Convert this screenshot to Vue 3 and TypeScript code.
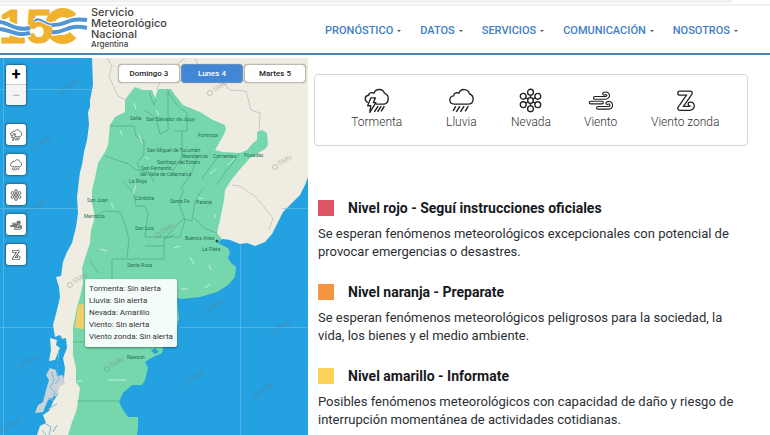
<script setup lang="ts">
import { ref } from 'vue'

interface Phenomenon { id: string; label: string; status: string }
interface Level { tone: string; title: string; text: string }
interface Place { name: string; x: number; y: number }

const menu: string[] = ['PRONÓSTICO', 'DATOS', 'SERVICIOS', 'COMUNICACIÓN', 'NOSOTROS']
const days: string[] = ['Domingo 3', 'Lunes 4', 'Martes 5']
const selectedDay = ref('Lunes 4')

const phenomena: Phenomenon[] = [
  { id: 'storm', label: 'Tormenta', status: 'Sin alerta' },
  { id: 'rain', label: 'Lluvia', status: 'Sin alerta' },
  { id: 'snow', label: 'Nevada', status: 'Amarillo' },
  { id: 'wind', label: 'Viento', status: 'Sin alerta' },
  { id: 'zonda', label: 'Viento zonda', status: 'Sin alerta' },
]

const levels: Level[] = [
  {
    tone: 'red',
    title: 'Nivel rojo - Seguí instrucciones oficiales',
    text: 'Se esperan fenómenos meteorológicos excepcionales con potencial de provocar emergencias o desastres.',
  },
  {
    tone: 'orange',
    title: 'Nivel naranja - Preparate',
    text: 'Se esperan fenómenos meteorológicos peligrosos para la sociedad, la vida, los bienes y el medio ambiente.',
  },
  {
    tone: 'yellow',
    title: 'Nivel amarillo - Informate',
    text: 'Posibles fenómenos meteorológicos con capacidad de daño y riesgo de interrupción momentánea de actividades cotidianas.',
  },
]

const places: Place[] = [
  { name: 'Salta', x: 130, y: 120 },
  { name: 'San Salvador de Jujuy', x: 146, y: 121 },
  { name: 'Formosa', x: 198, y: 137 },
  { name: 'San Miguel de Tucumán', x: 147, y: 152 },
  { name: 'Resistencia', x: 182, y: 158 },
  { name: 'Corrientes', x: 213, y: 158 },
  { name: 'Posadas', x: 244, y: 157 },
  { name: 'Santiago del Estero', x: 157, y: 164 },
  { name: 'San Fernando', x: 141, y: 170 },
  { name: 'del Valle de Catamarca', x: 140, y: 176 },
  { name: 'La Rioja', x: 129, y: 183 },
  { name: 'San Juan', x: 87, y: 202 },
  { name: 'Córdoba', x: 135, y: 200 },
  { name: 'Santa Fe', x: 170, y: 203 },
  { name: 'Paraná', x: 196, y: 204 },
  { name: 'Mendoza', x: 84, y: 218 },
  { name: 'San Luis', x: 135, y: 230 },
  { name: 'Buenos Aires', x: 185, y: 240 },
  { name: 'La Plata', x: 202, y: 251 },
  { name: 'Santa Rosa', x: 127, y: 267 },
  { name: 'Rawson', x: 127, y: 359 },
]

const marks: [number, number][] = [
  [62, 91], [210, 93], [34, 148], [275, 167], [28, 212], [158, 235],
  [70, 285], [207, 311], [22, 366], [107, 369], [274, 332], [188, 382], [256, 395], [4, 430],
]
</script>

<template>
  <svg class="defs" aria-hidden="true">
    <symbol id="storm" viewBox="0 0 24 24">
      <g class="line">
        <path d="M3.500 14C0 11.500 .5 7.500 4.500 7C4.500 4.500 7.500 4 9.500 5C11.500 0 18.500 .5 19.500 5C24.500 6.500 24.500 14 19.500 15.500H11.500" />
        <path d="M6.500 9.500h4.500l-2 4.500h2.500L5.500 23.500l1-6.500H3.500z" />
        <path class="drops" d="M13.500 17.500l-3.500 5.500M16.500 17.500l-3.500 5.500M19.500 17.500l-3 5" />
      </g>
    </symbol>
    <symbol id="rain" viewBox="0 0 24 24">
      <g class="line">
        <path d="M5 15.500C-.5 15 -.5 8 4.500 7.500C4.500 5 7 4 9.500 5C11.500 0 18.500 .5 19.500 5.500C24.500 7 24.500 15 19 15.500z" />
        <path class="drops" d="M6.500 17.500l-2.500 4.500M10.500 17.500l-3.500 5.500M14.500 17.500l-3.500 5.500M18.500 17.500l-3 5" />
      </g>
    </symbol>
    <symbol id="snow" viewBox="0 0 24 24">
      <g class="line">
        <circle cx="12" cy="12" r="2.700" />
        <path d="M12 6.800v2.500M12 14.700v2.500M7.500 9.400l2.200 1.300M14.300 13.300l2.200 1.300M16.500 9.400l-2.200 1.300M9.700 13.300l-2.200 1.300" />
        <circle cx="12" cy="4" r="2.800" /><circle cx="12" cy="20" r="2.800" />
        <circle cx="5" cy="8" r="2.800" /><circle cx="5" cy="16" r="2.800" />
        <circle cx="19" cy="8" r="2.800" /><circle cx="19" cy="16" r="2.800" />
      </g>
    </symbol>
    <symbol id="wind" viewBox="0 0 24 24">
      <g class="tube">
        <path d="M6.500 9.500H17C21 9 19.500 3.500 15.500 5.500M2.500 14H13.500M9.500 19H20C24 18.500 22.500 12.500 18.500 14.500" />
        <path class="core" d="M6.500 9.500H17C21 9 19.500 3.500 15.500 5.500M2.500 14H13.500M9.500 19H20C24 18.500 22.500 12.500 18.500 14.500" />
      </g>
    </symbol>
    <symbol id="zonda" viewBox="0 0 24 24">
      <g class="tube wide">
        <path d="M6.500 5H16.500L6.500 19.500H16C19.500 19 19 15 16.500 15.500" />
        <path class="core" d="M6.500 5H16.500L6.500 19.500H16C19.500 19 19 15 16.500 15.500" />
      </g>
    </symbol>
  </svg>

  <div class="page">
    <div class="topbar"></div>
    <header class="header">
      <a class="brand" href="#" aria-label="Servicio Meteorológico Nacional Argentina">
        <svg class="logo" viewBox="0 0 86 48" aria-hidden="true">
          <text x="-1" y="37" class="digits">15</text>
          <path class="ring" d="M73 11A13.500 13.500 0 1 0 73 29" />
          <g class="wave-edge">
            <path d="M-2 16C8 15 14 26 30 22M-2 23C8 22 14 31 30 27M52 19C66 20 68 11 87 14M52 26C64 28 68 17 87 22" />
            <path class="thin-edge" d="M34 15C40 10 44 18 53 19" />
          </g>
          <g class="wave">
            <path d="M-2 16C8 15 14 26 30 22M-2 23C8 22 14 31 30 27M52 19C66 20 68 11 87 14M52 26C64 28 68 17 87 22" />
            <path class="thin" d="M34 15C40 10 44 18 53 19" />
          </g>
        </svg>
        <span class="brand-text">Servicio<br />Meteorológico<br />Nacional<small>Argentina</small></span>
      </a>
      <nav class="nav">
        <a v-for="item in menu" :key="item" href="#">{{ item }}<i class="caret"></i></a>
      </nav>
    </header>

    <main class="main">
      <section class="map" aria-label="Mapa de alertas">
        <svg class="chart" viewBox="0 58 308 377" preserveAspectRatio="xMinYMin slice" aria-hidden="true">
          <path class="land" d="M92 58L93 85 90 100 90 107 88 112 89 125 87 140 84 152 82 165 80 172 79 180 77 197 78 213 76 227 72 243 67 252 63 262 61 276 56 277 59 287 60 297 57 310 53 325 55 337 60 335 62 339 66 338 67 348 63 358 65 368 64 378 60 383 55 388 58 394 54 400 49 411 43 415 46 423 40 426 37 435H110V330L218 240 223 239 230 240 240 244 247 243 255 246 265 242 272 234 275 228 283 212 292 203 300 195 305 185 308 177V58Z" />
          <path class="land" d="M50 338L57 340 56 345 60 348 55 360 49 361 51 350Z" />
          <path class="land isles" d="M50 368L56 370 57 376 63 375 65 384 60 386 57 395 48 400 43 412 35 413 38 405 43 402 46 390 49 380 46 375Z" />
          <path class="inlets" d="M52 372l2 9-4 6 5 5-3 8M60 378l-5 6M48 398l6 3M57 404l-9 5M44 423l7 4-2 8M57 425l-4 7M42 430l4 5M61 336l2 11M59 350l-1 11M58 363v15" />
          <path class="sea-gap" d="M58 340L62 338 65 345 62 358 61 373 57 373 59 357 60 347Z" />
          <path class="province-fill" d="M135 87L143 90 152 90 155 98 158 89 171 89 175 95 183 105 200 112 213 120 225 125 226 130 222 138 215 150 223 152 240 153 247 150 253 143 257 140 257 132 262 130 267 133 268 145 265 149 250 158 242 167 232 179 225 190 224 200 220 220 217 233 222 239 218 243 228 248 230 253 228 258 231 263 236 267 235 277 228 285 217 292 200 297 182 299 177 298 178 310 179 318 176 330 163 347 162 353 153 357 145 362 148 368 145 380 142 385 132 385 123 393 119 402 123 410 128 417 138 417 138 428 137 435H68L72 422 76 412 78 402 80 388 76 382 76 368 73 355 73 342 73 328 77 307 80 297 83 283 82 268 86 255 90 243 91 230 95 217 92 203 92 190 95 178 98 163 105 152 108 145 110 125 115 117 125 112 125 100 130 93Z" />
          <path class="alert-area" d="M78 305L84 304V329L75 328Z" />
          <path class="borders" d="M110 126h24l2 10 8 5v13l-7 9 3 7M144 110l12 8 4 16 8-4V90M149 92l5 13 2-5M168 92l9 13 10 8v18h-13M182 131v26l-10 15 5 5M105 156l24 8 7 6 12 2 6 10M124 182l10 12 2 12h9l3 8-3 23h35l5-17-6-17 5-14M95 217l9-6 16 1 5 12 4 15-2 19M90 260l8 13M112 259h52v-20l10-4M164 239l19-20 9 2 3-20 8-13M194 218l12 11 11 4M164 246h-19M112 259v34h30M73 342h48M77 401h42M198 155l-7 19-11 16M220 154l-18 24M240 153l-24 32" />
          <path class="far-borders" d="M107 58l5 8-3 10 9 20 12 6M195 58l8 18 15 2 12 12 16 1 5 19 9 3-1 20M232 185l8 1 16 11 17 21-4 12M157 89l6-14 22-17" />
          <path class="flecks" d="M134 103l2 6M139 135l3 8M156 110l3 5M198 198l5 1M215 214v4M111 203l3 6M174 248l6-2M190 257l4 7M209 265l2 5M169 284l5-5M181 289h7M145 157l4 2M100 249l7 2M210 174l6-5M120 130l2 5M136 185l-3 9M205 288l5-4M228 165l7-7M108 380h18M77 381h5" />
          <path class="grid" d="M0 89.500H92M3.500 58V435M0 208.500H77M282 208.500H308M240.500 245V435M0 327.500H53M180 327.500H308" />
          <path class="lake" d="M151 351l4-3 4 4-4 2z" />
          <g v-for="(m, i) in marks" :key="i" class="mark">
            <circle :cx="m[0]" :cy="m[1]" r="2.500" />
            <text :x="m[0] + 4" :y="m[1] + 1" :transform="`rotate(-28 ${m[0]} ${m[1]})`">SMN</text>
          </g>
          <text v-for="p in places" :key="p.name" class="place" :x="p.x" :y="p.y">{{ p.name }}</text>
          <circle cx="217" cy="241" r="1.500" class="capital" />
        </svg>

        <div class="controls">
          <div class="zoom">
            <button type="button" aria-label="Acercar">+</button>
            <button type="button" class="off" aria-label="Alejar">−</button>
          </div>
          <button v-for="p in phenomena" :key="p.id" type="button" class="tool" :aria-label="p.label">
            <svg><use :href="`#${p.id}`" /></svg>
          </button>
        </div>

        <div class="days">
          <button
            v-for="d in days"
            :key="d"
            type="button"
            :class="{ active: d === selectedDay }"
            @click="selectedDay = d"
          >{{ d }}</button>
        </div>

        <div class="tip" role="tooltip">
          <div v-for="p in phenomena" :key="p.id">{{ p.label }}: {{ p.status }}</div>
        </div>
      </section>

      <section class="info">
        <ul class="legend">
          <li v-for="p in phenomena" :key="p.id">
            <svg aria-hidden="true"><use :href="`#${p.id}`" /></svg>
            <span>{{ p.label }}</span>
          </li>
        </ul>
        <article v-for="l in levels" :key="l.tone" class="level">
          <h2><span class="swatch" :class="l.tone"></span>{{ l.title }}</h2>
          <p>{{ l.text }}</p>
        </article>
      </section>
    </main>
  </div>
</template>

<style>
body {
  background: #fff;
}
</style>

<style scoped>
* {
  box-sizing: border-box;
}
.defs {
  position: absolute;
  width: 0;
  height: 0;
}
.page {
  min-height: 100vh;
  display: flex;
  flex-direction: column;
  font-family: Roboto, "Liberation Sans", sans-serif;
  color: #2b2f33;
}
.topbar {
  height: 6px;
  border-bottom: 2px solid #f1f1f1;
}
.topbar::before {
  content: "";
  display: block;
  width: 95%;
  height: 3px;
  background: #f1f1f1;
  border-radius: 0 0 8px 0;
}
.header {
  height: 49px;
  display: flex;
  justify-content: space-between;
  border-bottom: 2px solid #4a86b0;
}
.brand {
  display: flex;
  gap: 5px;
  color: #444;
  text-decoration: none;
}
.logo {
  width: 86px;
  height: 48px;
  overflow: visible;
}
.digits {
  font: bold 48px "Liberation Sans", sans-serif;
  fill: #f0b12f;
  stroke: #f0b12f;
  stroke-width: 1;
}
.ring {
  fill: none;
  stroke: #f0b12f;
  stroke-width: 9;
}
.wave-edge,
.wave {
  fill: none;
}
.wave-edge {
  stroke: #fff;
  stroke-width: 7;
}
.wave {
  stroke: #5296d5;
  stroke-width: 4;
}
.thin {
  stroke-width: 2;
}
.thin-edge {
  stroke-width: 4;
}
.brand-text {
  padding-top: 1px;
  font: 500 11px/11px Inter, "Liberation Sans", sans-serif;
}
.brand-text small {
  display: block;
  font-size: 8px;
  line-height: 8px;
}
.nav {
  display: flex;
  align-items: center;
  gap: 19px;
  padding: 2px 32px 0 0;
}
.nav a {
  display: flex;
  align-items: center;
  gap: 4px;
  font-size: 11px;
  font-weight: 500;
  color: #3f7ec6;
  text-decoration: none;
}
.caret {
  border: 2px solid transparent;
  border-top-color: #555;
  border-bottom: 0;
}
.main {
  flex: 1;
  display: grid;
  grid-template-columns: 2fr 3fr;
  padding-top: 3px;
}
.map {
  position: relative;
  overflow: hidden;
  background: #23a1e1;
}
.chart {
  position: absolute;
  width: 100%;
  height: 100%;
}
.land {
  fill: #efede2;
}
.isles {
  fill: #c9d3d8;
}
.inlets {
  fill: none;
  stroke: #7fb7d8;
}
.sea-gap,
.lake {
  fill: #23a1e1;
}
.province-fill {
  fill: #75d7ab;
}
.alert-area {
  fill: #f3cf6c;
}
.borders {
  fill: none;
  stroke: #3f9e79;
  stroke-width: 1;
  opacity: 0.55;
}
.far-borders {
  fill: none;
  stroke: #b9b6b9;
  opacity: 0.7;
}
.flecks {
  fill: none;
  stroke: #c6f0dc;
}
.grid {
  fill: none;
  stroke: #6cc0ea;
  opacity: 0.6;
}
.mark {
  opacity: 0.35;
}
.mark circle {
  fill: none;
  stroke: #77716f;
}
.mark text {
  font-size: 7px;
  fill: #77716f;
}
.place {
  font-size: 5px;
  font-weight: 400;
  fill: #26725a;
}
.capital {
  fill: #125540;
}
.controls {
  position: absolute;
  top: 7px;
  left: 6px;
  display: flex;
  flex-direction: column;
  gap: 9px;
}
.zoom,
.tool {
  width: 20px;
  background: #fff;
  border: 0;
  border-radius: 3px;
  box-shadow: 0 0 2px 1px #27688f;
}
.zoom {
  margin-bottom: 10px;
  overflow: hidden;
}
.zoom button {
  display: block;
  width: 100%;
  height: 20px;
  padding: 0;
  border: 0;
  border-bottom: 1px solid #ccc;
  background: #fff;
  font: bold 16px/19px Roboto, sans-serif;
  color: #000;
}
.zoom .off {
  border: 0;
  background: #f4f4f4;
  color: #bbb;
  font-weight: 400;
}
.tool {
  height: 21px;
  padding: 4px;
}
.tool svg {
  display: block;
  width: 12px;
  height: 12px;
}
.days {
  position: absolute;
  top: 6px;
  right: 2px;
  display: flex;
  gap: 1px;
}
.days button {
  width: 62px;
  height: 19px;
  padding: 0;
  border: 1px solid #bdb9ae;
  border-radius: 4px;
  background: #fff;
  box-shadow: 0 0 1px #807d74;
  font: 500 8px Roboto, sans-serif;
  color: #222;
}
.days .active {
  background: #4286d6;
  border-color: #668fbd;
  color: #fff;
}
.tip {
  position: absolute;
  top: 221px;
  left: 85px;
  padding: 4px;
  border-radius: 2px;
  background: rgba(255, 255, 255, 0.92);
  box-shadow: 0 1px 2px rgba(0, 0, 0, 0.4);
  font-size: 8px;
  line-height: 12px;
  white-space: nowrap;
  color: #333;
}
.info {
  padding: 16px 22px 0 6px;
}
.legend {
  display: grid;
  grid-template-columns: 10fr 7fr 7fr 7fr 10fr;
  margin: 0 0 53px;
  padding: 13px 12px 14px;
  list-style: none;
  border: 1px solid #d5d5d5;
  border-radius: 4px;
}
.legend li {
  display: flex;
  flex-direction: column;
  align-items: center;
  font-size: 12px;
  font-weight: 300;
  line-height: 18px;
  color: #333;
  white-space: nowrap;
}
.legend svg {
  width: 25px;
  height: 25px;
}
.line {
  fill: none;
  stroke: #222;
  stroke-width: 1.3;
  stroke-linejoin: round;
}
.drops {
  stroke-width: 1.4;
}
.tube {
  fill: none;
  stroke: #222;
  stroke-width: 3.6;
  stroke-linecap: round;
  stroke-linejoin: round;
}
.tube .core {
  stroke: #fff;
  stroke-width: 1.5;
}
.wide {
  stroke-width: 5;
}
.wide .core {
  stroke-width: 2.6;
}
.level {
  margin: 0 8px 22px 4px;
}
.level h2 {
  display: flex;
  align-items: center;
  gap: 14px;
  margin: 0 0 8px;
  font-size: 14px;
  line-height: 18px;
  font-weight: 700;
  color: #16191c;
}
.level p {
  margin: 0;
  font-size: 13px;
  line-height: 18px;
}
.level:last-child {
  margin-bottom: 0;
}
.swatch {
  width: 16px;
  height: 16px;
}
.red {
  background: #dc5565;
}
.orange {
  background: #f4953f;
}
.yellow {
  background: #fbd35b;
}
</style>
